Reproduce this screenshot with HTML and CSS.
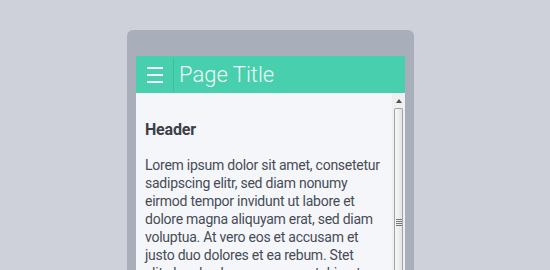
FILE: index.html
```html
<!DOCTYPE html>
<html>
<head>
<meta charset="utf-8">
<link rel="stylesheet" href="styles.css">
</head>
<body>
<div class="device">
  <div class="screen">
    <div class="appbar">
      <div class="menu" aria-label="Menu">
        <span></span><span></span><span></span>
      </div>
      <div class="divider"></div>
      <div class="title">Page Title</div>
    </div>
    <div class="body">
      <div class="content">
        <h2 class="heading">Header</h2>
        <p class="text">Lorem ipsum dolor sit amet, consetetur sadipscing elitr, sed diam nonumy eirmod tempor invidunt ut labore et dolore magna aliquyam erat, sed diam voluptua. At vero eos et accusam et justo duo dolores et ea rebum. Stet clita kasd gubergren, no sea takimata sanctus est Lorem ipsum dolor sit amet.</p>
      </div>
      <div class="scrollbar">
        <div class="arrow"></div>
        <div class="thumb"><div class="grip"><i></i><i></i><i></i><i></i></div></div>
      </div>
    </div>
  </div>
</div>
</body>
</html>
```

FILE: styles.css
```css
html, body {
  margin: 0;
  padding: 0;
  height: 100%;
  overflow: hidden;
}
body {
  background: #ced1da;
  font-family: Roboto, "Liberation Sans", sans-serif;
}
.device {
  margin: 30px 0 0 127px;
  width: 269px;
  height: 300px;
  padding: 26px 9px 0 9px;
  background: #a9afba;
  border-radius: 6px 6px 0 0;
}
.screen {
  background: #f5f6fa;
  height: 100%;
  display: flex;
  flex-direction: column;
}
.appbar {
  height: 37px;
  background: #48cfad;
  display: flex;
  align-items: center;
  flex: none;
}
.menu {
  width: 16px;
  margin-left: 11px;
  display: flex;
  flex-direction: column;
  gap: 5px;
}
.menu span {
  display: block;
  height: 2px;
  background: #f4fbf8;
}
.divider {
  width: 1px;
  align-self: stretch;
  margin: 2px 0 1px 10px;
  background: #3fbf9e;
}
.title {
  margin-left: 5px;
  color: #eefaf5;
  font-weight: 300;
  font-size: 22px;
  line-height: 37px;
}
.body {
  flex: 1;
  display: flex;
  min-height: 0;
}
.content {
  flex: 1;
  padding: 0 11px 0 9px;
  color: #464c55;
}
.heading {
  margin: 27px 0 0 0;
  font-size: 16px;
  font-weight: 700;
  line-height: 20px;
  color: #3a3f47;
  letter-spacing: -0.2px;
}
.text {
  margin: 16px 0 0 0;
  font-size: 14px;
  line-height: 18px;
  letter-spacing: -0.25px;
}
.scrollbar {
  width: 13px;
  flex: none;
  background: #f0f0f0;
  display: flex;
  flex-direction: column;
  align-items: center;
}
.arrow {
  width: 0;
  height: 0;
  margin-top: 6px;
  border-left: 3px solid transparent;
  border-right: 3px solid transparent;
  border-bottom: 4px solid #505050;
}
.thumb {
  margin-top: 5px;
  width: 9px;
  flex: 1;
  border: 1px solid #a3a3a3;
  border-bottom: none;
  border-radius: 2px 2px 0 0;
  background: linear-gradient(to right, #f6f6f6, #e4e4e4);
  display: flex;
  justify-content: center;
  padding-top: 110px;
  box-sizing: border-box;
}
.grip {
  display: flex;
  flex-direction: column;
  gap: 1px;
}
.grip i {
  display: block;
  width: 6px;
  height: 1px;
  background: #777;
}
```
